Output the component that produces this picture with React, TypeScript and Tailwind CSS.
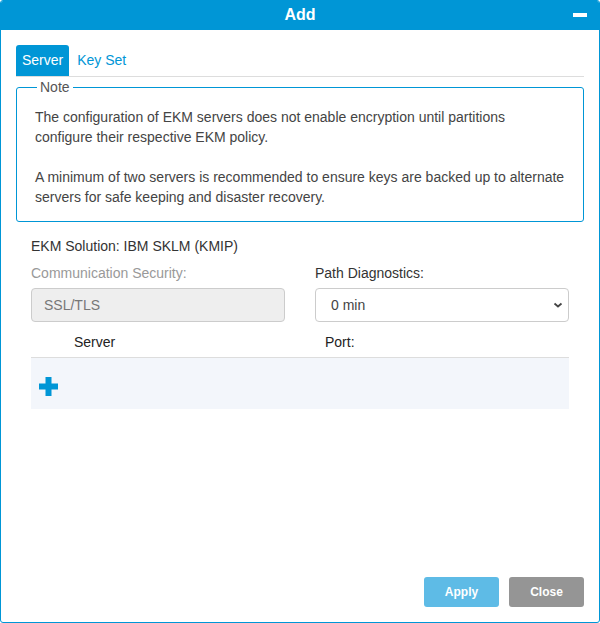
export default function App() {
  return (
    <div
      className="flex h-[623px] w-[600px] flex-col overflow-hidden rounded-[3px] border border-[#0096d6] bg-white text-[14px] text-[#333]"
      style={{ fontFamily: '"Liberation Sans", Arial, sans-serif' }}
    >
      <div className="relative flex h-[29px] shrink-0 items-center justify-center bg-[#0096d6]">
        <span className="-mt-[2px] text-[16px] font-bold leading-[18px] text-white">Add</span>
        <span className="absolute right-[12px] top-[12px] h-[4px] w-[14px] bg-white" />
      </div>

      <div className="flex flex-1 flex-col px-[15px]">
        <div className="mt-[15px] flex items-end border-b border-[#ddd]">
          <div className="flex h-[31px] items-center rounded-t-[3px] bg-[#0096d6] px-[6px] text-white">Server</div>
          <div className="flex h-[31px] items-center px-[8px] text-[#0096d6]">Key Set</div>
        </div>

        <fieldset className="mt-[2px] rounded-[3px] border border-[#0096d6] px-[18px] pb-[14px] pt-[12px] text-[#444]">
          <legend className="ml-[2px] px-[3px] leading-[16px] text-[#555]">Note</legend>
          <p className="leading-[20px]">
            The configuration of EKM servers does not enable encryption until partitions configure their respective EKM
            policy.
          </p>
          <p className="mt-[20px] leading-[20px]">
            A minimum of two servers is recommended to ensure keys are backed up to alternate servers for safe keeping and
            disaster recovery.
          </p>
        </fieldset>

        <div className="px-[15px]">
          <div className="mt-[15px] leading-[18px] text-[#333]">EKM Solution: IBM SKLM (KMIP)</div>
          <div className="mt-[9px] grid grid-cols-2 gap-x-[30px]">
            <div>
              <div className="leading-[18px] text-[#999]">Communication Security:</div>
              <div className="mt-[6px] flex h-[34px] items-center rounded-[4px] border border-[#ccc] bg-[#eee] px-[12px] text-[#777]">
                SSL/TLS
              </div>
            </div>
            <div>
              <div className="leading-[18px] text-[#333]">Path Diagnostics:</div>
              <div className="mt-[6px] flex h-[34px] items-center justify-between rounded-[4px] border border-[#ccc] bg-white pl-[15px] pr-[5px] text-[#444]">
                <span>0 min</span>
                <svg width="10" height="10" viewBox="0 0 10 10">
                  <path d="M1.5 3.5 L5 6.5 L8.5 3.5" fill="none" stroke="#444" strokeWidth="1.8" />
                </svg>
              </div>
            </div>
          </div>

          <div className="grid h-[36px] grid-cols-2 gap-x-[30px] border-b border-[#ddd] pt-[11px] leading-[18px] text-[#222]">
            <div className="pl-[43px]">Server</div>
            <div className="pl-[10px]">Port:</div>
          </div>
          <div className="flex h-[51px] items-center bg-[#f3f6fb] pl-[8px] pt-[6px]">
            <svg width="19" height="19" viewBox="0 0 19 19">
              <path d="M6.5 0h6v6.5H19v6h-6.5V19h-6v-6.5H0v-6h6.5z" fill="#0096d6" />
            </svg>
          </div>
        </div>

        <div className="mt-auto mb-[15px] flex justify-end gap-[10px]">
          <button className="h-[30px] w-[75px] rounded-[3px] bg-[#5ebbe6] text-[12px] font-bold text-white">Apply</button>
          <button className="h-[30px] w-[75px] rounded-[3px] bg-[#959595] text-[12px] font-bold text-white">Close</button>
        </div>
      </div>
    </div>
  );
}
